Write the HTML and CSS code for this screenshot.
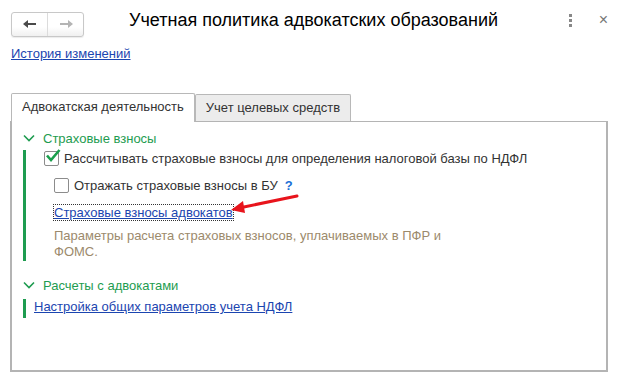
FILE: index.html
```html
<!DOCTYPE html>
<html lang="ru">
<head>
  <meta charset="UTF-8">
  <title>Учетная политика адвокатских образований</title>
  <link rel="stylesheet" href="styles.css">
</head>
<body>
  <header class="titlebar">
    <div class="nav">
      <button class="nav-btn"><svg width="16" height="10" viewBox="0 0 16 10"><path d="M1 5 L6 1 V4 H14 V6 H6 V9 Z" fill="#4a4a4a"/></svg></button>
      <button class="nav-btn"><svg width="16" height="10" viewBox="0 0 16 10"><path d="M15 5 L10 1 V4 H2 V6 H10 V9 Z" fill="#b4b4b4"/></svg></button>
    </div>
    <h1 class="title">Учетная политика адвокатских образований</h1>
    <div class="win-tools">
      <span class="more"><i></i><i></i><i></i></span>
      <span class="close">×</span>
    </div>
  </header>

  <a class="link history" href="#">История изменений</a>

  <div class="tabs">
    <div class="tab active">Адвокатская деятельность</div>
    <div class="tab">Учет целевых средств</div>
  </div>

  <main class="panel">
    <div class="group">
      <div class="group-title"><svg width="12" height="8" viewBox="0 0 12 8"><path d="M1 1.5 L6 6.5 L11 1.5" fill="none" stroke="#1e9c50" stroke-width="1.6"/></svg>Страховые взносы</div>
      <div class="group-body">
        <label class="check-row">
          <span class="box"><svg width="16" height="14" viewBox="0 0 16 14"><path d="M2 6.5 L6 11 L14.5 1" fill="none" stroke="#1a9f4c" stroke-width="2.6"/></svg></span>
          Рассчитывать страховые взносы для определения налоговой базы по НДФЛ
        </label>
        <label class="check-row sub">
          <span class="box"></span>
          Отражать страховые взносы в БУ <span class="help">?</span>
        </label>
        <div class="sub link-row">
          <a class="link focus" href="#">Страховые взносы адвокатов</a>
        </div>
        <p class="sub note">Параметры расчета страховых взносов, уплачиваемых в ПФР и<br>ФОМС.</p>
      </div>
    </div>

    <div class="group second">
      <div class="group-title"><svg width="12" height="8" viewBox="0 0 12 8"><path d="M1 1.5 L6 6.5 L11 1.5" fill="none" stroke="#1e9c50" stroke-width="1.6"/></svg>Расчеты с адвокатами</div>
      <div class="group-body short">
        <a class="link" href="#">Настройка общих параметров учета НДФЛ</a>
      </div>
    </div>

    <svg class="arrow" width="80" height="26" viewBox="0 0 80 26"><path d="M70 4 L12 16" stroke="#e8141c" stroke-width="3" stroke-linecap="round"/><path d="M4 18 L16 9 L18 21 Z" fill="#e8141c"/></svg>
  </main>
</body>
</html>
```

FILE: styles.css
```css
* { box-sizing: border-box; }
html, body {
  margin: 0;
  padding: 0;
  width: 618px;
  height: 378px;
  background: #fff;
  font-family: Arial, "Liberation Sans", sans-serif;
  font-size: 13px;
  color: #333;
  overflow: hidden;
}
.titlebar {
  display: flex;
  align-items: center;
  height: 40px;
  padding: 8px 10px 0 11px;
}
.nav {
  display: flex;
  width: 73px;
  height: 25px;
  border: 1px solid #c8c8c8;
  border-radius: 3px;
  background: linear-gradient(#fff 60%, #f0f0f0);
  box-shadow: 0 1px 1px rgba(0,0,0,0.08);
}
.nav-btn {
  flex: 1;
  border: none;
  background: none;
  padding: 0;
  display: flex;
  align-items: center;
  justify-content: center;
}
.nav-btn + .nav-btn { border-left: 1px solid #dcdcdc; }
.title {
  margin: 0 0 0 45px;
  font-size: 18px;
  font-weight: normal;
  color: #000;
  flex: 1;
  white-space: nowrap;
  position: relative;
  top: -4px;
}
.win-tools {
  display: flex;
  align-items: center;
  gap: 27px;
  position: relative;
  top: -4px;
}
.more { display: flex; flex-direction: column; gap: 2px; }
.more i { width: 3px; height: 3px; background: #888; display: block; }
.close { color: #777; font-size: 16px; line-height: 1; }

.link { color: #1b45b0; text-decoration: underline; }
.history { display: inline-block; margin: 6px 0 0 11px; }

.tabs {
  display: flex;
  align-items: flex-end;
  margin: 31px 0 0 11px;
  height: 29px;
}
.tab {
  height: 27px;
  padding: 5px 10px 0;
  border: 1px solid #b8b8b8;
  border-bottom: none;
  border-radius: 2px 2px 0 0;
  background: #ececec;
  color: #333;
  white-space: nowrap;
}
.tab.active {
  height: 29px;
  padding-top: 5px;
  background: #fff;
  position: relative;
  top: 1px;
  z-index: 1;
}
.panel {
  position: relative;
  margin-left: 10px;
  width: 598px;
  height: 251px;
  border: 2px solid #b4b4b4;
  border-width: 1px 2px 2px 2px;
  padding: 7px 0 0 11px;
}
.group-title {
  display: flex;
  align-items: center;
  gap: 8px;
  color: #1e9c50;
  height: 18px;
}
.group-body {
  margin-top: 3px;
  border-left: 3px solid #1e9c50;
  padding: 0 0 1px 18px;
}
.check-row {
  display: flex;
  align-items: center;
  gap: 5px;
  height: 16px;
}
.check-row.sub { margin-top: 11px; }
.box {
  width: 15px;
  height: 15px;
  border: 1px solid #8c8c8c;
  border-radius: 2px;
  background: #fff;
  position: relative;
}
.box svg { position: absolute; left: 0; top: -3px; }
.help { color: #1b6fd6; font-weight: bold; margin-left: 2px; }
.sub { margin-left: 10px; }
.link-row { margin-top: 12px; height: 16px; }
.focus { outline: 1px dotted #333; outline-offset: 0; }
.note {
  margin-top: 7px;
  margin-bottom: 0;
  color: #9c8a6c;
  line-height: 16px;
}
.second { margin-top: 15px; }
.group-body.short { margin-top: 5px; padding-left: 8px; height: 19px; }
.arrow { position: absolute; left: 215px; top: 70px; }
```
